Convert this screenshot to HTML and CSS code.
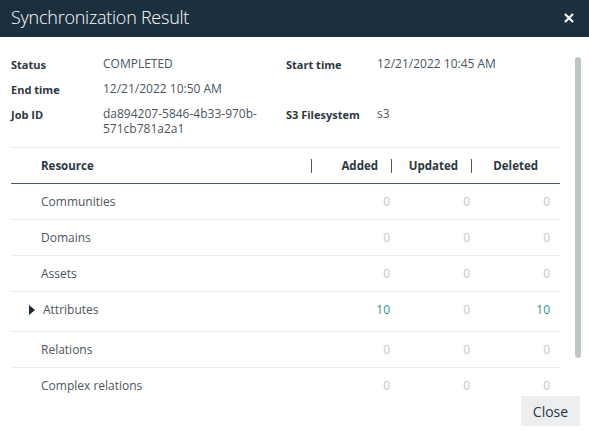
FILE: index.html
```html
<!DOCTYPE html>
<html>
<head>
<meta charset="utf-8">
<link rel="stylesheet" href="styles.css">
</head>
<body>
<div class="dialog">
  <div class="header">
    <div class="title">Synchronization Result</div>
    <svg class="close-x" width="10" height="10" viewBox="0 0 10 10"><path d="M1 1L9 9M9 1L1 9" stroke="#fff" stroke-width="2.2" stroke-linecap="butt"/></svg>
  </div>
  <div class="body">
    <div class="info">
      <div class="lbl">Status</div><div class="val">COMPLETED</div>
      <div class="lbl">Start time</div><div class="val">12/21/2022 10:45 AM</div>
      <div class="lbl">End time</div><div class="val">12/21/2022 10:50 AM</div>
      <div class="lbl"></div><div class="val"></div>
      <div class="lbl">Job ID</div><div class="val">da894207-5846-4b33-970b-571cb781a2a1</div>
      <div class="lbl">S3 Filesystem</div><div class="val">s3</div>
    </div>
    <div class="table">
      <div class="row head">
        <div class="cell name">Resource</div>
        <div class="cell hnum"><span class="sep"></span><span>Added</span></div>
        <div class="cell hnum"><span class="sep"></span><span>Updated</span></div>
        <div class="cell hnum"><span class="sep"></span><span>Deleted</span></div>
      </div>
      <div class="row">
        <div class="cell name">Communities</div>
        <div class="cell num zero">0</div><div class="cell num zero">0</div><div class="cell num zero">0</div>
      </div>
      <div class="row">
        <div class="cell name">Domains</div>
        <div class="cell num zero">0</div><div class="cell num zero">0</div><div class="cell num zero">0</div>
      </div>
      <div class="row">
        <div class="cell name">Assets</div>
        <div class="cell num zero">0</div><div class="cell num zero">0</div><div class="cell num zero">0</div>
      </div>
      <div class="row tall">
        <div class="cell name expand"><span class="tri"></span><span>Attributes</span></div>
        <div class="cell num pos">10</div><div class="cell num zero">0</div><div class="cell num pos">10</div>
      </div>
      <div class="row">
        <div class="cell name">Relations</div>
        <div class="cell num zero">0</div><div class="cell num zero">0</div><div class="cell num zero">0</div>
      </div>
      <div class="row">
        <div class="cell name">Complex relations</div>
        <div class="cell num zero">0</div><div class="cell num zero">0</div><div class="cell num zero">0</div>
      </div>
    </div>
    <div class="thumb"></div>
  </div>
  <div class="footer">
    <button class="btn">Close</button>
  </div>
</div>
</body>
</html>
```
FILE: styles.css
```css
html, body {
  margin: 0;
  padding: 0;
  background: #fff;
}
body {
  font-family: "Open Sans", "Noto Sans", sans-serif;
  color: #4a545c;
}
.dialog {
  width: 589px;
  height: 434px;
  display: flex;
  flex-direction: column;
  overflow: hidden;
  position: relative;
}
.header {
  height: 37px;
  flex: none;
  background: #1b2f3e;
  display: flex;
  align-items: center;
  justify-content: space-between;
  padding: 0 15px 0 11px;
}
.title {
  color: #fff;
  font-size: 18px;
  font-weight: 300;
  letter-spacing: -0.25px;
  margin-top: -3px;
}
.close-x {
  margin-top: -1px;
}
.body {
  flex: 1;
  position: relative;
  overflow: hidden;
  padding: 0 29px 0 11px;
}
.info {
  display: grid;
  grid-template-columns: 92px 183px 91px 1fr;
  grid-auto-rows: minmax(25px, auto);
  padding-top: 15px;
  padding-bottom: 11px;
  border-bottom: 1px solid #ebebeb;
  align-items: start;
}
.lbl {
  font-size: 11px;
  font-weight: 700;
  color: #2b3740;
  line-height: 15px;
  padding-top: 5px;
}
.val {
  font-size: 12px;
  color: #4b555d;
  line-height: 15px;
  padding-top: 4px;
  padding-right: 12px;
}
.row {
  display: grid;
  grid-template-columns: 1fr 80px 80px 80px;
  height: 35px;
  align-items: center;
  border-bottom: 1px solid #ebebeb;
}
.row.tall {
  height: 35px;
  padding-bottom: 4px;
}
.row.head {
  height: 35px;
  border-bottom: 1px solid #4c5b65;
}
.cell {
  font-size: 12px;
}
.name {
  padding-left: 30px;
  color: #4b555d;
}
.head .name {
  font-weight: 700;
  color: #2b3740;
  font-size: 11.5px;
}
.hnum {
  display: flex;
  justify-content: space-between;
  align-items: center;
  margin-left: -9px;
  padding-right: 22px;
  font-weight: 700;
  color: #2b3740;
  font-size: 11.5px;
}
.sep {
  width: 1px;
  height: 14px;
  background: #4c5b65;
}
.num {
  text-align: right;
  padding-right: 10px;
}
.zero {
  color: #c2c6ca;
}
.pos {
  color: #2f9a7c;
}
.expand {
  display: flex;
  align-items: center;
  padding-left: 18px;
  gap: 8px;
}
.tri {
  width: 0;
  height: 0;
  border-top: 5px solid transparent;
  border-bottom: 5px solid transparent;
  border-left: 6px solid #1c2a35;
}
.thumb {
  position: absolute;
  left: 575px;
  top: 20px;
  width: 6px;
  height: 301px;
  border-radius: 3px;
  background: #bec5c8;
}
.footer {
  flex: none;
  display: flex;
  justify-content: flex-end;
  padding: 0 9px 8px 0;
}
.btn {
  width: 59px;
  height: 30px;
  border: none;
  background: #eceef0;
  color: #2b3740;
  font-family: "Open Sans", "Noto Sans", sans-serif;
  font-size: 14px;
  padding: 0;
}
```
